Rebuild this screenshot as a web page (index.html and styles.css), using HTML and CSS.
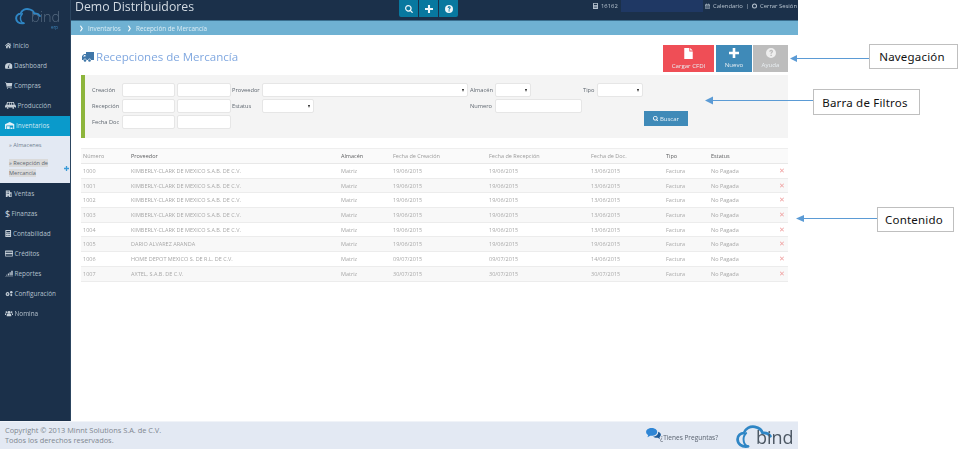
FILE: index.html
```html
<!DOCTYPE html>
<html lang="es">
<head>
<meta charset="utf-8">
<title>Recepciones de Mercancía</title>
<link rel="stylesheet" href="styles.css">
</head>
<body>
<svg class="defs" width="0" height="0" aria-hidden="true">
  <symbol id="i-home" viewBox="0 0 12 10"><path d="M6 0 0 5l1 1 5-4 5 4 1-1-2-1.700V1H8.500v1.200zM2 6.200V10h3V7h2v3h3V6.200L6 3z"/></symbol>
  <symbol id="i-dash" viewBox="0 0 12 10"><path d="M6 1a6 6 0 0 0-6 6c0 1 .2 2 .7 3h10.600c.5-1 .7-2 .7-3a6 6 0 0 0-6-6zm.8 6.800a1.200 1.200 0 1 1-1.500-1.200L6.500 3l.7.200-.9 3.600c.4.200.5.600.5 1z"/></symbol>
  <symbol id="i-cart" viewBox="0 0 12 10"><path d="M0 0h2l.4 1H12l-1.200 5H3.500l.3 1H11v1H3L1.300 1H0z"/><circle cx="4" cy="9.200" r=".8"/><circle cx="9.500" cy="9.200" r=".8"/></symbol>
  <symbol id="i-factory" viewBox="0 0 16 10"><path d="M3 0h10l1 4h1v1h1v3h-1.200a1.800 1.800 0 0 0-3.400 0H5.600a1.800 1.800 0 0 0-3.400 0H0V5h1V4h1zM4 1 3.500 4H6V1zm3 0v3h2V1zm3 0v3h2.500L12 1z"/><circle cx="3.900" cy="8.500" r="1.300"/><circle cx="12.100" cy="8.500" r="1.300"/></symbol>
  <symbol id="i-ware" viewBox="0 0 14 10"><path d="M7 0 0 3v7h2V5h10v5h2V3z"/><path d="M3 6h4v4H3zm5 2h3v2H8z"/></symbol>
  <symbol id="i-build" viewBox="0 0 12 12"><path d="M1 1h7v3h3v8H6v-2H4v2H1zm1.500 1.500v1.500H4V2.500zm2.500 0v1.500h1.500V2.500zM2.500 5.500V7H4V5.500zm2.500 0V7h1.500V5.500zm3.500 1V8H10V6.500zm0 2.500v1.500H10V9z"/></symbol>
  <symbol id="i-calc" viewBox="0 0 10 12"><path d="M1 0h8a1 1 0 0 1 1 1v10a1 1 0 0 1-1 1H1a1 1 0 0 1-1-1V1a1 1 0 0 1 1-1zm.8 1.500v2.500h6.400V1.500zm0 4V7h1.500V5.500zm2.400 0V7h1.500V5.500zm2.500 0V7h1.500V5.500zM1.800 8.500V10h1.500V8.500zm2.400 0V10h1.500V8.500zm2.500 0V10h1.500V8.500z"/></symbol>
  <symbol id="i-card" viewBox="0 0 12 9"><path d="M1 0h10a1 1 0 0 1 1 1v7a1 1 0 0 1-1 1H1a1 1 0 0 1-1-1V1a1 1 0 0 1 1-1zm0 2v1.500h10V2zm0 3.500V8h10V5.500z"/></symbol>
  <symbol id="i-bars" viewBox="0 0 14 10"><path d="M0 10h14v-.8H0zM2 8.500h2V7H2zm3 0h2V5H5zm3 0h2V3H8zm3 0h2.500V0H11z"/></symbol>
  <symbol id="i-gear" viewBox="0 0 14 10"><path d="M4.500 2 5.300 3l1.300-.2.300 1.300 1.100.700-.6 1.200.6 1.200-1.100.7-.3 1.300-1.300-.2-.8 1-.8-1-1.300.2-.3-1.300L1 7.200 1.600 6 1 4.800l1.100-.7.300-1.300 1.300.2zm0 2.600a1.400 1.400 0 1 0 0 2.800 1.400 1.400 0 0 0 0-2.800z"/><circle cx="11" cy="2.700" r="2.200"/><circle cx="11" cy="7.800" r="1.800"/></symbol>
  <symbol id="i-users" viewBox="0 0 14 10"><circle cx="7" cy="3" r="2.500"/><circle cx="2.500" cy="2.500" r="1.600"/><circle cx="11.500" cy="2.500" r="1.600"/><path d="M3 10V7.500A2.500 2.500 0 0 1 5.500 5h3A2.500 2.500 0 0 1 11 7.500V10zM0 7.500V6a1.500 1.500 0 0 1 1.500-1.500h1c-.5.500-.7 1.500-.7 3zm14 0V6a1.500 1.500 0 0 0-1.500-1.500h-1c.5.500.7 1.500.7 3z"/></symbol>
  <symbol id="i-truck" viewBox="0 0 12 10"><path d="M4 0h8v8H9a1.500 1.500 0 0 0-3 0H4.500a1.500 1.500 0 0 0-3 0H0V4l2-2h2zM1 4.500h2.500V3H2.400z"/><circle cx="3" cy="8.500" r="1.300"/><circle cx="7.500" cy="8.500" r="1.300"/></symbol>
  <symbol id="i-file" viewBox="0 0 10 13"><path d="M0 0h6v4h4v9H0zM7 0l3 3H7z"/></symbol>
  <symbol id="i-plus" viewBox="0 0 10 10"><path d="M3.700 0h2.600v3.700H10v2.600H6.300V10H3.700V6.300H0V3.700h3.700z"/></symbol>
  <symbol id="i-help" viewBox="0 0 12 12"><path fill-rule="evenodd" d="M6 0a6 6 0 1 1 0 12A6 6 0 0 1 6 0zM4 4.500h1.500c0-.6.300-1 .6-1 .5 0 .7.300.7.700 0 .8-1.500 1-1.500 2.800h1.500c0-1.200 1.700-1.300 1.700-3C8.500 2.700 7.400 2 6 2 4.800 2 4 3 4 4.500zM5.300 8v1.700H7V8z"/></symbol>
  <symbol id="i-search" viewBox="0 0 12 12"><path fill-rule="evenodd" d="M5 0a5 5 0 0 1 4 8l3 3-1.200 1.200-3-3A5 5 0 1 1 5 0zm0 1.800a3.200 3.200 0 1 0 0 6.400 3.200 3.200 0 0 0 0-6.400z"/></symbol>
  <symbol id="i-cal" viewBox="0 0 10 10"><path d="M0 2h2V0h1v2h4V0h1v2h2v8H0zm1 2v5h8V4z"/><path d="M2 5h1.500v1H2zm2.300 0h1.500v1H4.300zm2.300 0H8v1H6.600zM2 7h1.500v1H2zm2.300 0h1.500v1H4.300zm2.300 0H8v1H6.600z"/></symbol>
  <symbol id="i-power" viewBox="0 0 10 10"><path fill-rule="evenodd" d="M5 0a5 5 0 1 1 0 10A5 5 0 0 1 5 0zm0 2a3 3 0 1 0 0 6 3 3 0 0 0 0-6z"/></symbol>
  <symbol id="i-chat" viewBox="0 0 16 13"><path d="M6 0c3.300 0 6 1.800 6 4.200S9.300 8.400 6 8.400H4.500L1.500 10l.7-2.400C.8 6.900 0 5.600 0 4.200 0 1.800 2.700 0 6 0z"/><path class="chat-back" d="M13 4c1.800.6 3 1.900 3 3.300 0 1-.6 2-1.500 2.600L15 12l-2.500-1.500c-2 .2-4-.3-5-1.300 3-.2 6-2 5.500-5.200z"/></symbol>
  <symbol id="i-cloud" viewBox="0 0 46 30"><path fill="none" stroke-width="3.500" stroke-linecap="round" d="M15 27C7 28 2 24 2 18c0-5 4-8 8-8 2-6 8-9 14-8 5 1 9 4 10 8 4-.5 8 1 10 4"/><path fill="none" stroke-width="2.500" stroke-linecap="round" d="M13 10c-3 3-4 7-3 11 .7 3 3 5.500 6 6"/></symbol>
</svg>

<div class="app">
  <aside class="side">
    <div class="brand">
      <svg class="cloud"><use href="#i-cloud"/></svg>
      <span class="brand-name">bind</span>
      <span class="brand-erp">erp</span>
    </div>
    <nav class="menu">
      <a class="item"><svg class="ic ic6"><use href="#i-home"/></svg>Inicio</a>
      <a class="item"><svg class="ic ic7"><use href="#i-dash"/></svg>Dashboard</a>
      <a class="item"><svg class="ic ic7"><use href="#i-cart"/></svg>Compras</a>
      <a class="item"><svg class="ic ic11"><use href="#i-factory"/></svg>Producción</a>
      <a class="item item-on"><svg class="ic ic9"><use href="#i-ware"/></svg>Inventarios</a>
      <div class="sub">
        <a class="sub-a">» Almacenes</a>
        <div class="sub-row">
          <a class="sub-b"><span class="sub-mark">» Recepción de</span><br><span class="sub-mark">Mercancía</span></a>
          <svg class="sub-plus"><use href="#i-plus"/></svg>
        </div>
      </div>
      <a class="item item-ventas"><svg class="ic ic7"><use href="#i-build"/></svg>Ventas</a>
      <a class="item"><span class="dollar">$</span>Finanzas</a>
      <a class="item"><svg class="ic ic6"><use href="#i-calc"/></svg>Contabilidad</a>
      <a class="item"><svg class="ic ic8"><use href="#i-card"/></svg>Créditos</a>
      <a class="item"><svg class="ic ic8"><use href="#i-bars"/></svg>Reportes</a>
      <a class="item"><svg class="ic ic8"><use href="#i-gear"/></svg>Configuración</a>
      <a class="item"><svg class="ic ic8"><use href="#i-users"/></svg>Nomina</a>
    </nav>
  </aside>

  <div class="main">
    <header class="top">
      <h1 class="app-name">Demo Distribuidores</h1>
      <div class="tools">
        <span class="tool"><svg class="tool-ic"><use href="#i-search"/></svg></span>
        <span class="tool"><svg class="tool-ic"><use href="#i-plus"/></svg></span>
        <span class="tool"><svg class="tool-ic"><use href="#i-help"/></svg></span>
      </div>
      <div class="account">
        <svg class="mini"><use href="#i-calc"/></svg><span class="acc-num">16162</span>
        <span class="acc-block"></span>
        <svg class="mini"><use href="#i-cal"/></svg><span>Calendario</span>
        <span class="acc-sep">|</span>
        <svg class="mini"><use href="#i-power"/></svg><span>Cerrar Sesión</span>
      </div>
    </header>
    <div class="crumbs">
      <span class="chev">❯</span><span class="crumb-first">Inventarios</span><span class="chev">❯</span><span>Recepción de Mercancía</span>
    </div>

    <main class="content">
      <div class="head-row">
        <h2 class="title"><svg class="title-ic"><use href="#i-truck"/></svg>Recepciones de Mercancía</h2>
        <div class="actions">
          <a class="act act-red"><svg class="act-ic act-file"><use href="#i-file"/></svg>Cargar CFDI</a>
          <a class="act act-blue"><svg class="act-ic"><use href="#i-plus"/></svg>Nuevo</a>
          <a class="act act-gray"><svg class="act-ic"><use href="#i-help"/></svg>Ayuda</a>
        </div>
      </div>

      <form class="filters">
        <label class="lb lb-first">Creación</label>
        <span class="fld c2"></span><span class="fld c4"></span>
        <label class="lb c6">Proveedor</label>
        <span class="fld sel c7"></span>
        <label class="lb c9">Almacén</label>
        <span class="fld sel c10"></span>
        <label class="lb c12">Tipo</label>
        <span class="fld sel c13"></span>

        <label class="lb lb-first">Recepción</label>
        <span class="fld c2"></span><span class="fld c4"></span>
        <label class="lb c6">Estatus</label>
        <span class="fld sel c7 w-est"></span>
        <label class="lb c9">Numero</label>
        <span class="fld c-num"></span>

        <label class="lb lb-first">Fecha Doc</label>
        <span class="fld c2"></span><span class="fld c4"></span>
        <a class="search"><svg class="search-ic"><use href="#i-search"/></svg>Buscar</a>
      </form>

      <table class="grid">
        <thead>
          <tr>
            <th class="w1 dim">Número</th><th class="w2">Proveedor</th><th class="w3">Almacén</th><th class="w4 dim">Fecha de Creación</th><th class="w5 dim">Fecha de Recepción</th><th class="w6 dim">Fecha de Doc.</th><th class="w7">Tipo</th><th class="w8">Estatus</th><th class="w9"></th>
          </tr>
        </thead>
        <tbody>
          <tr><td>1000</td><td>KIMBERLY-CLARK DE MEXICO S.A.B. DE C.V.</td><td>Matriz</td><td>19/06/2015</td><td>19/06/2015</td><td>13/06/2015</td><td>Factura</td><td>No Pagada</td><td class="del">✕</td></tr>
          <tr><td>1001</td><td>KIMBERLY-CLARK DE MEXICO S.A.B. DE C.V.</td><td>Matriz</td><td>19/06/2015</td><td>19/06/2015</td><td>13/06/2015</td><td>Factura</td><td>No Pagada</td><td class="del">✕</td></tr>
          <tr><td>1002</td><td>KIMBERLY-CLARK DE MEXICO S.A.B. DE C.V.</td><td>Matriz</td><td>19/06/2015</td><td>19/06/2015</td><td>13/06/2015</td><td>Factura</td><td>No Pagada</td><td class="del">✕</td></tr>
          <tr><td>1003</td><td>KIMBERLY-CLARK DE MEXICO S.A.B. DE C.V.</td><td>Matriz</td><td>19/06/2015</td><td>19/06/2015</td><td>13/06/2015</td><td>Factura</td><td>No Pagada</td><td class="del">✕</td></tr>
          <tr><td>1004</td><td>KIMBERLY-CLARK DE MEXICO S.A.B. DE C.V.</td><td>Matriz</td><td>19/06/2015</td><td>19/06/2015</td><td>13/06/2015</td><td>Factura</td><td>No Pagada</td><td class="del">✕</td></tr>
          <tr><td>1005</td><td>DARIO ALVAREZ ARANDA</td><td>Matriz</td><td>19/06/2015</td><td>19/06/2015</td><td>19/06/2015</td><td>Factura</td><td>No Pagada</td><td class="del">✕</td></tr>
          <tr><td>1006</td><td>HOME DEPOT MEXICO S. DE R.L. DE C.V.</td><td>Matriz</td><td>09/07/2015</td><td>09/07/2015</td><td>14/06/2015</td><td>Factura</td><td>No Pagada</td><td class="del">✕</td></tr>
          <tr><td>1007</td><td>AXTEL, S.A.B. DE C.V.</td><td>Matriz</td><td>30/07/2015</td><td>30/07/2015</td><td>30/07/2015</td><td>Factura</td><td>No Pagada</td><td class="del">✕</td></tr>
        </tbody>
      </table>
    </main>
  </div>

  <footer class="foot">
    <p class="copy">Copyright © 2013 Minnt Solutions S.A. de C.V.<br>Todos los derechos reservados.</p>
    <div class="foot-right">
      <svg class="chat"><use href="#i-chat"/></svg>
      <span class="ask">¿Tienes Preguntas?</span>
      <span class="foot-logo"><svg class="foot-cloud"><use href="#i-cloud"/></svg><span class="foot-bind">bind</span></span>
    </div>
  </footer>
</div>

<svg class="arrows" width="958" height="450" aria-hidden="true">
  <path d="M796 58.500h73M713 100.500h100M804 218.500h73"/>
  <polygon points="790,58.500 797,55 797,62"/>
  <polygon points="705,100.500 713,96.500 713,104.500"/>
  <polygon points="796,218.500 804,215 804,222"/>
</svg>
<div class="note note-nav">Navegación</div>
<div class="note note-fil">Barra de Filtros</div>
<div class="note note-con">Contenido</div>
</body>
</html>
```
FILE: styles.css
```css
* { box-sizing: border-box; }
html, body { margin: 0; padding: 0; }
body {
  width: 958px;
  height: 450px;
  overflow: hidden;
  background: #fff;
  position: relative;
  font-family: "Open Sans", "Noto Sans", sans-serif;
}
.defs { position: absolute; }
p, h1, h2 { margin: 0; font-weight: 400; }

.app {
  width: 798px;
  height: 449px;
  display: grid;
  grid-template-columns: 71px 727px;
  grid-template-rows: 421px 28px;
  filter: blur(0.3px);
}

/* Sidebar */
.side { background: #1b304a; border-right: 1px solid #2c4560; }
.brand { height: 36px; position: relative; }
.cloud { position: absolute; left: 15px; top: 8px; width: 26px; height: 17px; stroke: #2f86c5; }
.brand-name { position: absolute; left: 31px; top: 9px; font-size: 14.500px; line-height: 15px; color: #566a80; font-weight: 300; }
.brand-erp { position: absolute; left: 51px; top: 25px; font-size: 4.500px; line-height: 5px; color: #3f86bd; }
.menu { display: flex; flex-direction: column; }
.item {
  height: 20px;
  display: flex;
  align-items: center;
  padding-left: 5px;
  padding-bottom: 1px;
  font-size: 6.400px;
  color: #b4c0cc;
  gap: 1.500px;
}
.item-on { background: #0a9acb; color: #cfe6f2; }
.item-ventas { margin-top: 1px; }
.ic { fill: #c6cfd8; height: 7px; flex: none; }
.ic6 { width: 6.500px; }
.ic7 { width: 7.500px; }
.ic8 { width: 8px; }
.ic9 { width: 9.500px; }
.ic11 { width: 11px; }
.item-on .ic { fill: #e4f1f8; }
.dollar { font-size: 9px; color: #d6dde4; width: 4px; margin-right: 1px; }
.sub { background: #e3e9f3; height: 47px; padding: 5px 0 0 9px; font-size: 5.600px; color: #6f7f90; }
.sub-a { display: block; line-height: 8px; height: 8px; }
.sub-row { display: flex; align-items: center; margin-top: 9px; }
.sub-b { line-height: 10px; width: 55px; color: #5a6570; flex: none; }
.sub-mark { background: #dadada; }
.sub-plus { width: 5px; height: 5px; fill: #3b9bd8; flex: none; }

/* Header */
.main { display: flex; flex-direction: column; min-width: 0; }
.top {
  height: 21px;
  background: #1b304a;
  border-bottom: 1px solid #3a6f8f;
  position: relative;
  display: flex;
  align-items: flex-start;
}
.app-name { margin-left: 4px; font-size: 12.300px; line-height: 14px; color: #d2dae2; }
.tools { position: absolute; left: 328px; top: 0; width: 59px; height: 17px; display: flex; gap: 1px; }
.tool { flex: 1; background: #08789f; display: flex; align-items: center; justify-content: center; }
.tool:first-child { border-radius: 0 0 0 2px; }
.tool:last-child { border-radius: 0 0 2px 0; }
.tool-ic { width: 8px; height: 8px; fill: #eef6fa; }
.account {
  position: absolute;
  left: 522px;
  right: 0;
  top: 0;
  height: 12px;
  display: flex;
  align-items: center;
  font-size: 5.900px;
  color: #b8c4d0;
  gap: 3px;
  white-space: nowrap;
}
.mini { width: 5px; height: 6px; fill: #b8c4d0; flex: none; }
.acc-num { width: 20px; }
.acc-block { width: 82px; height: 12px; background: #1f3864; margin: 0 -1px 0 -3px; flex: none; }

.crumbs {
  height: 14px;
  background: #6fb1d2;
  display: flex;
  align-items: center;
  padding-left: 8px;
  font-size: 6.300px;
  color: #dcedf5;
}
.chev { width: 9px; font-size: 5.500px; color: #fff; font-family: "DejaVu Sans", sans-serif; font-weight: 700; }
.crumb-first { width: 39px; }

/* Content */
.content { flex: 1; padding: 10px 10px 0; background: #fff; }
.head-row { height: 30px; display: flex; justify-content: space-between; align-items: flex-start; }
.title { display: flex; align-items: center; height: 23px; font-size: 11.550px; color: #80a8e0; gap: 2px; }
.title-ic { width: 12px; height: 10px; fill: #3f76a8; margin-left: 1px; }
.actions { display: flex; gap: 2px; height: 27px; }
.act {
  display: flex;
  flex-direction: column;
  align-items: center;
  font-size: 6.100px;
  color: #e8eef2;
  padding-top: 3px;
  height: 27px;
  gap: 2px;
}
.act-red { width: 51px; background: #ef4e56; }
.act-blue { width: 36px; background: #3f8ab8; }
.act-gray { width: 35px; margin-left: -1px; background: #bdbdbd; }
.act-ic { width: 10px; height: 10px; fill: #fff; flex: none; }
.act-gray .act-ic { fill: #eee; }
.act-file { width: 9px; height: 11px; }

.filters {
  height: 63px;
  background: #f4f4f4;
  border-left: 4px solid #8db53c;
  padding: 8px 0 0 7px;
  display: grid;
  grid-template-columns: 30px 53px 2px 54px 1px 30px 206px 2px 25px 36px 52px 14px 46px 1px 44px;
  grid-template-rows: 14px 14px 14px;
  row-gap: 2px;
  align-content: start;
  font-size: 5.700px;
  color: #5f6770;
}
.lb { display: flex; align-items: center; white-space: nowrap; }
.lb-first { grid-column: 1; }
.fld { background: #fff; border: 1px solid #e6e6e6; border-radius: 2px; position: relative; }
.c2 { grid-column: 2; }
.c4 { grid-column: 4; }
.c6 { grid-column: 6; }
.c7 { grid-column: 7; }
.c9 { grid-column: 9; }
.c10 { grid-column: 10; }
.c12 { grid-column: 12; }
.c13 { grid-column: 13; }
.c-num { grid-column: 10 / span 2; width: 87px; }
.w-est { width: 52px; }
.sel::after {
  content: "";
  position: absolute;
  right: 3px;
  top: 5px;
  border-left: 1.500px solid transparent;
  border-right: 1.500px solid transparent;
  border-top: 3px solid #222;
}
.search {
  grid-column: 15;
  grid-row: 2 / span 2;
  align-self: end;
  margin-bottom: 3px;
  height: 15px;
  background: #3f8ab8;
  color: #e6f0f6;
  font-size: 6px;
  display: flex;
  align-items: center;
  justify-content: center;
  gap: 1.500px;
}
.search-ic { width: 5.500px; height: 5.500px; fill: #fff; }

.grid {
  width: 707px;
  margin-top: 10px;
  border-collapse: collapse;
  table-layout: fixed;
  font-size: 5.500px;
  color: #a8a8a8;
}
.grid th, .grid td { text-align: left; padding: 0 0 0 2px; font-weight: 400; white-space: nowrap; overflow: hidden; }
.grid th { height: 15px; background: #fafafa; color: #5f6062; border-top: 1px solid #eee; border-bottom: 1px solid #e8e8e8; }
.grid th.dim { color: #9a9a9a; }
.grid td { height: 14.700px; border-bottom: 1px solid #ececec; }
.grid tbody tr:nth-child(even) td { background: #f8f8f8; }
.w1 { width: 48px; }
.w2 { width: 210px; }
.w3 { width: 52px; }
.w4 { width: 96px; }
.w5 { width: 102px; }
.w6 { width: 75px; }
.w7 { width: 45px; }
.w8 { width: 70px; }
.w9 { width: 9px; }
.grid td.del { color: #f0a0a0; font-size: 7px; padding-left: 0; font-family: "DejaVu Sans", sans-serif; }

/* Footer */
.foot {
  grid-column: 1 / span 2;
  background: #e3e9f3;
  border-top: 1px solid #f0f3f8;
  display: flex;
  justify-content: space-between;
  align-items: flex-start;
  padding: 3px 6px 0 5px;
  position: relative;
}
.copy { font-size: 7.400px; line-height: 10px; color: #7f8790; }
.foot-right { display: flex; align-items: center; height: 24px; }
.chat { width: 15px; height: 12px; fill: #2f86d5; margin-top: -6px; margin-left: 1px; }
.chat-back { fill: #1f5c9a; }
.ask { font-size: 6.500px; color: #5a6370; margin-right: 18px; margin-left: -1px; }
.foot-logo { position: relative; width: 56px; height: 24px; display: block; }
.foot-cloud { position: absolute; left: 0; top: 0; width: 36px; height: 24px; stroke: #2f86c5; }
.foot-bind { position: absolute; left: 20px; top: -1px; font-size: 18px; line-height: 26px; color: #4c5763; }

/* Annotations */
.arrows { position: absolute; left: 0; top: 0; pointer-events: none; }
.arrows path { stroke: #5b9bd5; stroke-width: 1; fill: none; }
.arrows polygon { fill: #5b9bd5; }
.note {
  position: absolute;
  background: #fff;
  border: 1px solid #bfbfbf;
  display: flex;
  align-items: center;
  justify-content: center;
  padding-right: 3px;
  font-family: "Noto Sans", sans-serif;
  font-size: 11.500px;
  letter-spacing: 0.2px;
  color: #111;
}
.note-nav { left: 869px; top: 44px; width: 89px; height: 25px; }
.note-fil { left: 813px; top: 89px; width: 107px; height: 26px; }
.note-con { left: 877px; top: 207px; width: 77px; height: 25px; }
```
